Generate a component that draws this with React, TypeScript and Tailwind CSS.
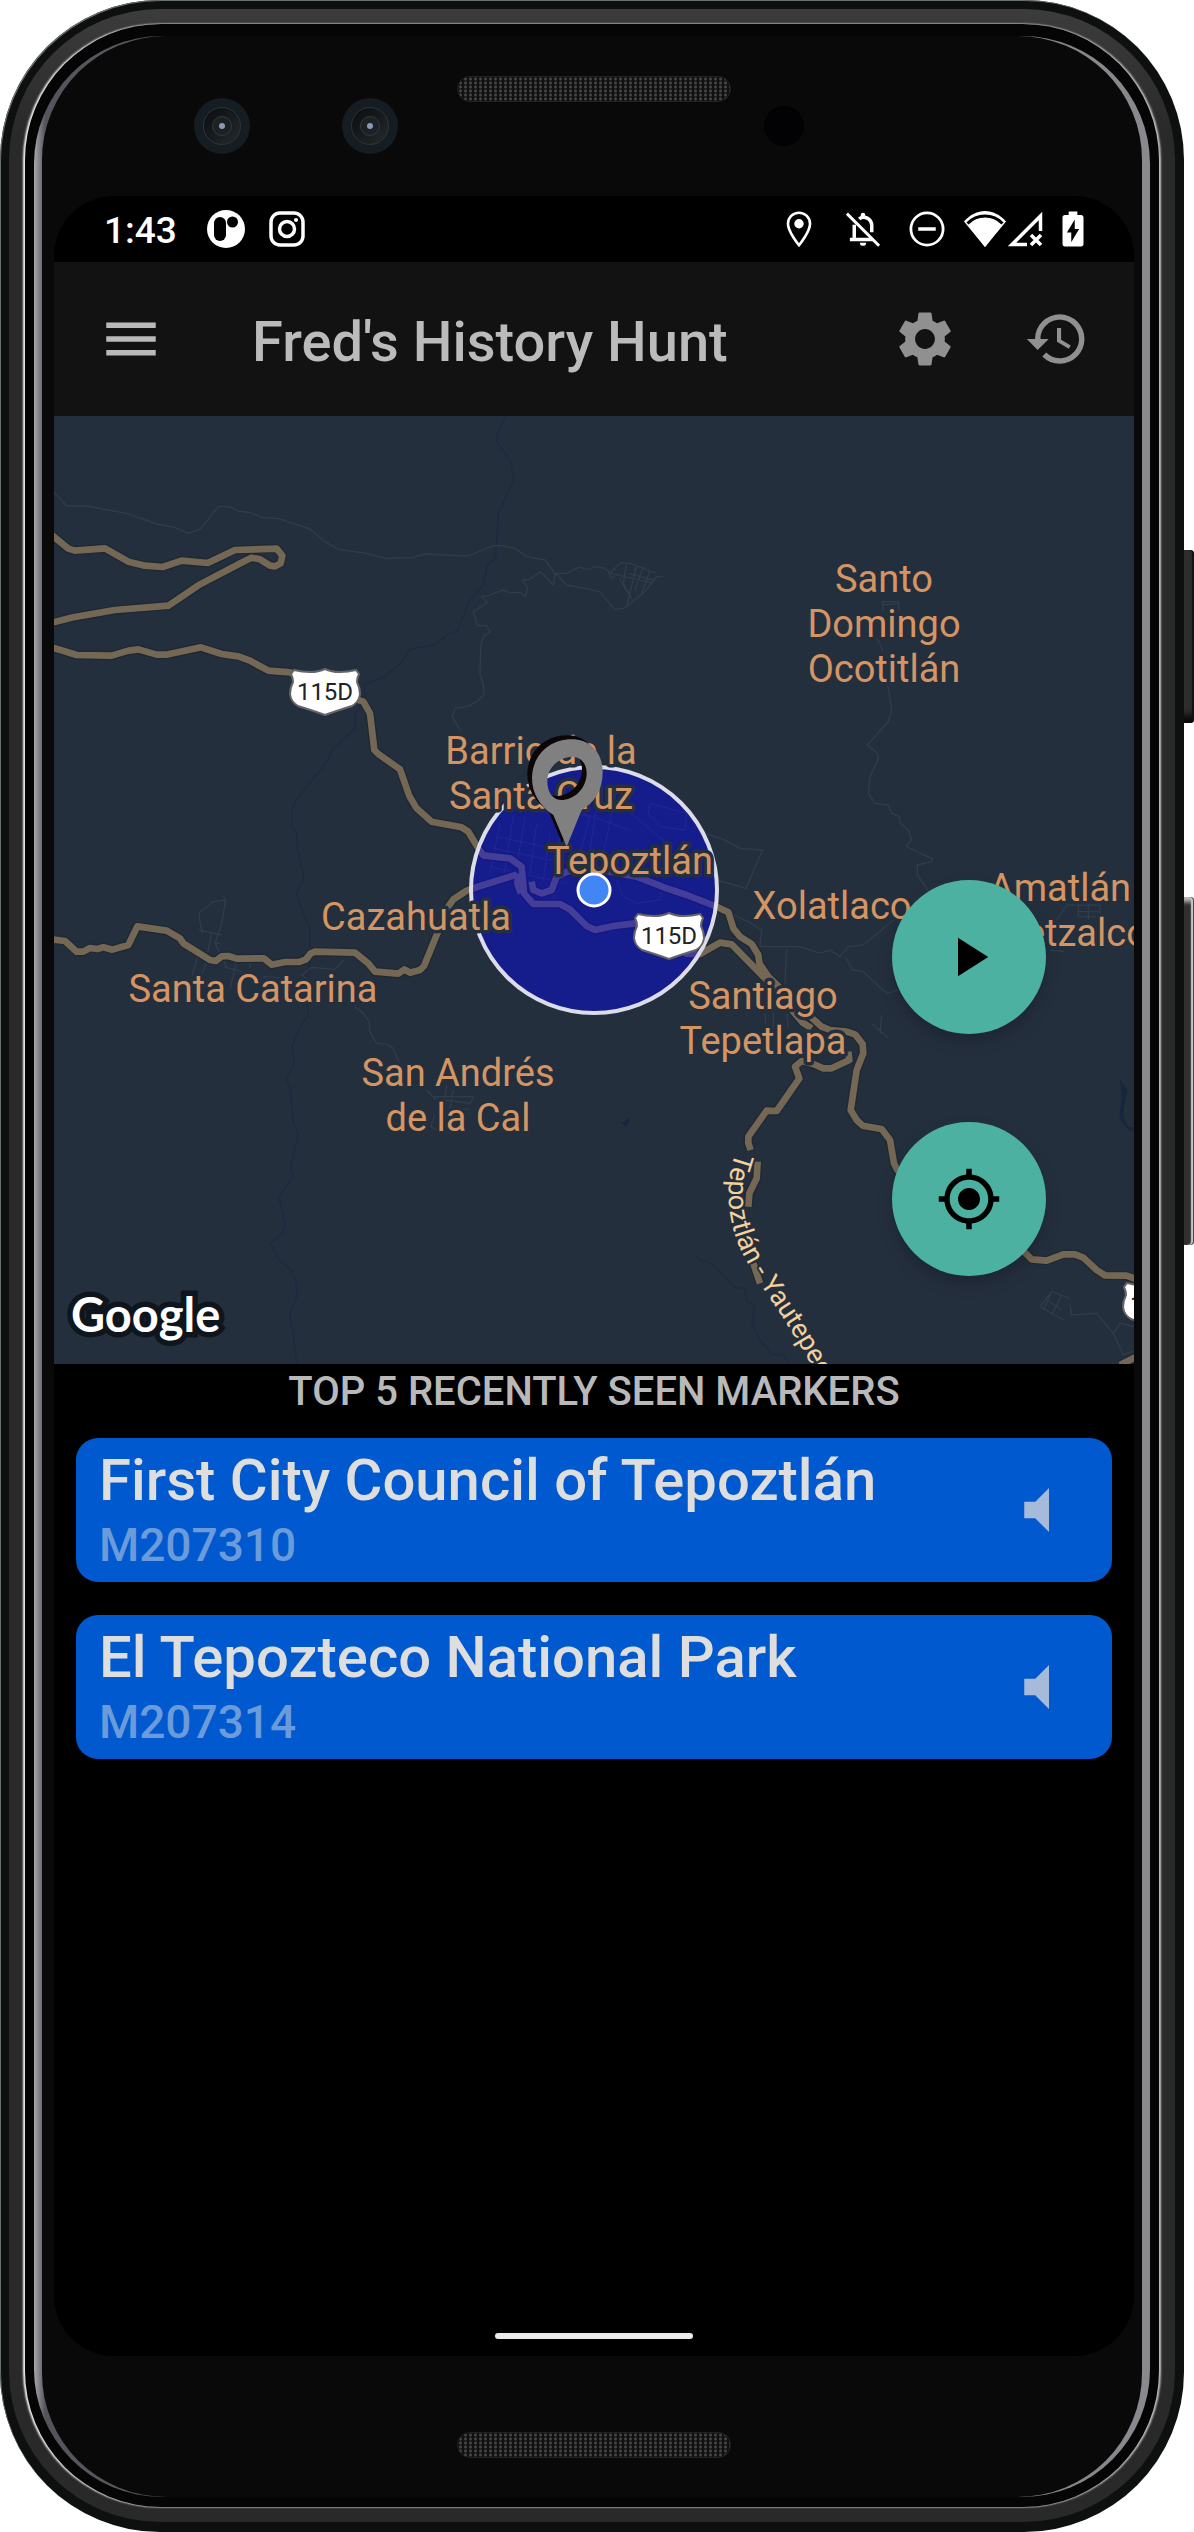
import type { ReactNode } from "react";
import { MdHistory, MdMenu, MdMyLocation, MdPlayArrow, MdSettings, MdVolumeMute } from "react-icons/md";

const markers = [
  { title: "First City Council of Tepoztlán", code: "M207310" },
  { title: "El Tepozteco National Park", code: "M207314" },
];

/* ---------- Device parts ---------- */

function Speaker() {
  return (
    <div className="h-[26px] w-[274px] rounded-full border border-[#222222] bg-[#101010] bg-[radial-gradient(circle,#444444_1px,transparent_2px)] bg-[length:5px_4px]" />
  );
}

function Lens() {
  return (
    <div className="flex size-14 items-center justify-center rounded-full bg-[#161d22]">
      <div className="flex size-[38px] items-center justify-center rounded-full border border-[#2f3438] bg-linear-to-br from-[#0b0d0f] to-[#262a2d]">
        <div className="flex size-5 items-center justify-center rounded-full border border-[#33383d] bg-[#1c2126]">
          <div className="size-1.5 rounded-full bg-[#8d97b5]" />
        </div>
      </div>
    </div>
  );
}

function Phone({ children }: { children: ReactNode }) {
  return (
    <div className="flex min-h-screen bg-white pr-[10px]">
      <div className="relative flex flex-1 flex-col">
        <div className="absolute top-[550px] -right-[10px] h-[173px] w-5 rounded-r-[4px] bg-[#2d2f2f] shadow-[inset_-2px_0_1px_#111,inset_0_-12px_6px_-4px_#0a0a0a]" />
        <div className="absolute top-[897px] -right-[10px] h-[348px] w-5 rounded-r-[4px] bg-[#303030] shadow-[inset_-1px_0_0_#444,inset_-3px_0_1px_#c8c8c8,inset_0_5px_4px_#bbb]" />
        <div className="relative flex flex-1 flex-col rounded-[160px] bg-[#0e0f0f] px-[9px] pt-[9px] pb-[10px] shadow-[inset_1px_1px_0_#6b6f6f]">
          <div className="flex flex-1 flex-col rounded-[151px] bg-[#2b2b2b] bg-linear-to-b from-[#3c3c3c] from-0% via-[#292929] via-5% to-[#292929] px-4 py-[15px]">
            <div className="flex flex-1 flex-col rounded-[136px] bg-[#050505] px-[9px] pt-3 pb-[10px] shadow-[-2px_0_2px_0px_#f0f0f0,2px_0_2px_0px_#c0c0c0]">
              <div className="flex flex-1 flex-col rounded-[128px] bg-linear-to-r from-[#aaaaad] from-0% via-[#55545c] via-1% to-[#8a8a8e] px-2">
                <div className="flex flex-1 flex-col rounded-[124px] bg-[#090909] pr-[8px] pl-3">
                  <div className="grid h-40 shrink-0 grid-cols-[1fr_auto_1fr]">
                    <div className="flex items-center justify-end gap-[92px] pt-5 pr-[59px]">
                      <Lens />
                      <Lens />
                    </div>
                    <div className="pt-10">
                      <Speaker />
                    </div>
                    <div className="flex items-center pt-5 pl-[33px]">
                      <div className="size-10 rounded-full bg-[#020104]" />
                    </div>
                  </div>
                  {children}
                  <div className="flex h-[141px] shrink-0 items-center justify-center pt-9">
                    <Speaker />
                  </div>
                </div>
              </div>
            </div>
          </div>
        </div>
      </div>
    </div>
  );
}

/* ---------- Status bar ---------- */

function StatusBar() {
  return (
    <div className="flex h-[66px] shrink-0 items-center pr-10 pl-[50px] text-white">
      <span className="pt-0.5 text-[37px] leading-none font-medium">1:43</span>
      <svg className="ml-[30px] size-[38px]" viewBox="0 0 38 38" aria-hidden="true">
        <circle cx="19" cy="19" r="19" fill="#fff" />
        <rect x="7" y="7" width="12" height="24" rx="6" fill="#000" />
        <circle cx="25.500" cy="12" r="5.500" fill="#000" />
      </svg>
      <svg className="ml-6 size-9" viewBox="0 0 36 36" fill="none" stroke="#fff" strokeWidth="3.500" aria-hidden="true">
        <rect x="2" y="2" width="32" height="32" rx="9" />
        <circle cx="18" cy="18" r="7.500" />
        <circle cx="27" cy="9" r="2" fill="#fff" stroke="none" />
      </svg>

      <div className="ml-auto flex items-center">
        <svg className="size-[42px]" viewBox="0 0 24 24" aria-hidden="true">
          <path
            d="M12 2.700C8.500 2.700 5.700 5.500 5.700 9c0 4.600 6.300 12.300 6.300 12.300S18.300 13.600 18.300 9c0-3.500-2.800-6.300-6.300-6.300z"
            fill="none"
            stroke="#fff"
            strokeWidth="1.500"
          />
          <circle cx="12" cy="9" r="2.700" fill="#fff" />
        </svg>
        <svg className="ml-[22px] size-[42px]" viewBox="0 0 24 24" fill="none" stroke="#fff" strokeWidth="1.500" aria-hidden="true">
          <path d="M2.800 3.200l18.400 18.400" strokeWidth="1.700" />
          <path d="M7 9.500V18M4.500 18h13M9.800 6.200C12.600 4 17 6 17 10.200v3.600" strokeWidth="2" />
          <path d="M10.700 4a1.300 1.300 0 0 1 2.600 0v1.500h-2.600zM10.200 19.800h3.600a1.800 1.800 0 0 1-3.600 0z" fill="#fff" stroke="none" />
        </svg>
        <svg className="ml-[22px] size-[42px]" viewBox="0 0 24 24" fill="none" stroke="#fff" aria-hidden="true">
          <circle cx="12" cy="12" r="9.200" strokeWidth="1.600" />
          <path d="M7 12h10" strokeWidth="2" />
        </svg>
        <svg className="ml-4 h-9 w-[42px]" viewBox="0 0 42 36" aria-hidden="true">
          <path d="M21 36L0 10.500C12-3.500 30-3.500 42 10.500z" fill="#fff" />
          <path d="M3.500 12.500C13 2.500 29 2.500 38.500 12.500" fill="none" stroke="#000" strokeWidth="3" />
          <path d="M21 36L5.500 16C14 7.500 28 7.500 36.500 16z" fill="#fff" />
        </svg>
        <svg className="ml-0.5 size-9" viewBox="0 0 36 36" fill="none" stroke="#fff" strokeWidth="3.500" aria-hidden="true">
          <path d="M32.500 20V5L4 33.500h15" />
          <path d="M23 24l10 10M33 24L23 34" />
        </svg>
        <svg className="ml-2 size-[42px]" viewBox="0 0 24 24" aria-hidden="true">
          <path
            d="M16.700 4H14.500V2h-5v2H7.300C6.600 4 6 4.600 6 5.300v15.300c0 .8.600 1.400 1.300 1.400h9.300c.8 0 1.400-.6 1.400-1.300V5.300c0-.7-.6-1.300-1.300-1.300zM11 19.500V14H8.500L13 6.500V12h2.500z"
            fill="#fff"
          />
        </svg>
      </div>
    </div>
  );
}

/* ---------- Map ---------- */

/* Line work is stored at three units per map pixel. */
const highways = [
  "M155 1605L205 1646 225 1652 315 1645 385 1685 435 1697 488 1701 545 1682 623 1689 705 1650 830 1646 847 1667 842 1690 825 1699 810 1697 780 1678 755 1673 740 1680 600 1753 505 1817 345 1830 220 1852 155 1868",
  "M155 1942L230 1965 335 1967 385 1952 415 1948 470 1964 498 1964 603 1942 665 1962 715 1969 750 1982 805 2012 870 2017 1070 2098 1090 2105 1110 2140 1123 2250 1135 2262 1200 2308 1228 2388 1250 2425 1295 2465 1385 2482 1405 2495 1435 2545 1450 2566 1530 2575 1565 2600 1572 2680 1600 2712 1680 2712 1710 2728 1760 2778 1785 2790 1840 2778 1905 2770 2060 2862 2100 2862 2160 2828 2195 2833 2295 2935 2408 3068 2435 3085",
  "M155 2818L195 2823 230 2855 250 2855 270 2844 292 2847 310 2842 337 2849 385 2835 412 2779 500 2792 540 2815 550 2830 630 2880 647 2883 665 2869 685 2868 710 2876 792 2875 815 2894 855 2886 898 2886 918 2878 932 2860 945 2855 1065 2858 1105 2890 1125 2915 1195 2921 1213 2908 1230 2918 1260 2910 1272 2898 1310 2805 1345 2720 1360 2698 1400 2672 1440 2658 1550 2624",
  "M1555 2620L1552 2650 1562 2680M1595 2645L1600 2670 1625 2680 1655 2670 1670 2630 1700 2615 1800 2610 1910 2630 2000 2665 2060 2685 2150 2720 2185 2737 2200 2785 2220 2810 2255 2832 2275 2865 2278 2890 2305 2930 2440 3058 2465 3080 2490 3090 2540 3095 2565 3103 2588 3132 2590 3160 2570 3210 2552 3330 2570 3360 2588 3377 2645 3387 2670 3420 2682 3490 2692 3510 2800 3640 3050 3740 3075 3758 3095 3778 3140 3782 3190 3763 3225 3763 3250 3773 3290 3810 3315 3826 3380 3827 3410 3838",
  "M2545 3155L2548 3180 2495 3205 2470 3205 2440 3192 2405 3183 2385 3200 2398 3235 2330 3333 2300 3332 2245 3410 2245 3430 2252 3450M2273 3485L2270 3535 2248 3580 2245 3620M2260 3790L2280 3850",
  "M3360 4095L3410 4070",
];

const streets = [
  "M160 1475L200 1518 260 1518 380 1540 470 1572 525 1582 565 1600 600 1588 655 1520 688 1520 715 1533 750 1538 785 1552 835 1556 930 1587 975 1625 1015 1648 1100 1660 1155 1675 1235 1673 1275 1662 1405 1668 1480 1637 1505 1636 1545 1645 1580 1670 1635 1680 1665 1720 1700 1720 1735 1702 1765 1708 1785 1700 1815 1705 1830 1718 1865 1687 1890 1690 1970 1720",
  "M1665 1720L1660 1755 1622 1715 1590 1738 1568 1740 1582 1765 1577 1790 1562 1778 1530 1778 1508 1770 1465 1787 1445 1790 1462 1808 1420 1835 1432 1877 1460 1877 1470 1895 1450 1910 1442 1940 1440 2025 1450 2050 1452 2085 1430 2105 1400 2120 1365 2125 1357 2150 1383 2195",
  "M1665 1720L1700 1755 1755 1765 1798 1775 1845 1828 1872 1825 1930 1780 1970 1730 1990 1730M1825 1718L1960 1750M1880 1690L1870 1750 1895 1795M1910 1695L1880 1820M1930 1700L1905 1770M1950 1712L1925 1780M1885 1720L1965 1742M1858 1735L1885 1780M1825 1718L1835 1735 1845 1728",
  "M2648 1837V1805H2696V1833M2650 1815L2695 1810M2630 1915L2640 1930 2648 1955M2663 2055L2675 2130 2665 2165 2602 2235 2632 2260 2635 2275 2610 2330 2605 2380 2625 2410 2665 2415 2675 2440 2698 2450 2700 2470 2725 2490 2735 2520 2718 2538 2770 2565 2798 2575 2795 2585 2752 2595 2752 2625 2790 2680",
  "M2120 2502L2170 2518 2220 2545 2288 2550 2238 2665 2150 2640",
  "M670 2688L677 2700 665 2770 645 2830 680 2900M677 2700L640 2705 600 2735 597 2750 607 2800M597 2790L665 2805M635 2800L620 2870M645 2830H660M600 2845L577 2925M672 2900L725 2915M740 2860L750 2880 750 2905M708 2893L690 2965M790 2930L840 2933M605 2920L620 2890",
  "M1030 2880L1005 2908 935 2902 905 2925 925 2940M1065 3020L1090 3040 1108 3065 1110 3095 1130 3130 1162 3133 1180 3145 1197 3190M1280 3270L1300 3290 1420 3290 1410 3310 1300 3295M1340 3255L1330 3320M1360 3270L1350 3325 1408 3328M1305 3345L1292 3380 1330 3400",
  "M2190 2740L2245 2765 2285 2790 2280 2840H2400L2460 2860 2490 2850 2520 2870 2545 2840 2590 2835 2680 2760M2538 2873L2558 2910 2590 2915 2660 2980 2695 2970M2360 2845L2355 2950M2615 3070L2665 3115M2645 3045L2640 3100M2296 3040V3080M2320 3040V3090M2360 3040L2365 3085",
  "M3170 2760L3200 2715H3300V2750H3235V2715M3265 2715V2760M3235 2735H3300M3150 2850L3195 2855",
  "M3120 3920L3155 3875 3210 3895M3140 3900L3185 3930M3120 3920L3190 3960M3155 3875L3130 3930M3185 3885L3155 3945M3210 3915L3215 3945 3290 3940 3340 4000 3360 3970 3405 3980M3340 4000L3370 4065 3410 4050",
];

const townGrid =
  "M1490 2510L1680 2550M1480 2545L1850 2620M1470 2600L1700 2650M1500 2470L1470 2620M1540 2450L1510 2640M1575 2450L1550 2600M1610 2470L1590 2620M1650 2500L1630 2640M1690 2420L1660 2700M1730 2440L1770 2450 1740 2560M1800 2350L1770 2550M1850 2370L1810 2560M1870 2420L2000 2530M1750 2440L1890 2490M1950 2410L2060 2440 2055 2490 1980 2480 1945 2440ZM1850 2640L1870 2690 1910 2710 1980 2700 1990 2660";

const rivers = [
  "M1516 1248L1495 1295 1490 1325 1530 1378 1542 1440 1495 1540 1487 1675 1462 1695 1450 1755 1408 1805 1372 1892 1340 1905 1310 1932 1228 1948 1205 1985 1155 2030 1095 2052 1095 2100 1065 2140 1065 2185 1000 2245 980 2285 885 2405 875 2430 877 2485 890 2500 892 2545 912 2632 890 2680 905 2730 930 2780 930 2850 920 3010 925 3045 900 3080 875 3140 883 3190 858 3235 870 3260 880 3370 895 3400 872 3500 880 3525 837 3592 855 3670 850 3695 812 3730 840 3785 870 3805 888 3840 890 3890 868 3940 880 4000 890 4092",
  "M2090 3768L2100 3782 2130 3788 2205 3863 2235 3865 2240 3905 2265 3915 2255 3965 2280 4020 2315 4062 2350 4065 2370 4100",
];

const labelGroups = [
  { x: 830, y: 176, lines: ["Santo", "Domingo", "Ocotitlán"] },
  { x: 487, y: 348, lines: ["Barrio de la", "Santa Cruz"] },
  { x: 576, y: 458, lines: ["Tepoztlán"] },
  { x: 362, y: 514, lines: ["Cazahuatla"] },
  { x: 199, y: 586, lines: ["Santa Catarina"] },
  { x: 404, y: 670, lines: ["San Andrés", "de la Cal"] },
  { x: 709, y: 593, lines: ["Santiago", "Tepetlapa"] },
  { x: 778, y: 503, lines: ["Xolatlaco"] },
  { x: 1006, y: 485, lines: ["Amatlán"] },
  { x: 1030, y: 530, lines: ["Quetzalcoatl"] },
];

const pinShape =
  "M500 1310L460 1215C420 1190 396 1150 396 1105C396 1040 445 988 515 988C572 988 608 1030 608 1085C608 1140 585 1175 545 1200ZM442 1112C442 1152 462 1172 490 1170C530 1166 560 1130 560 1090C560 1060 542 1040 515 1040C475 1042 442 1075 442 1112Z";

function Shield({ x, y }: { x: number; y: number }) {
  return (
    <g transform={`translate(${x} ${y})`}>
      <path
        d="M4 2Q12 4 20 4Q29 4 35 1Q41 4 50 4Q58 4 66 2L69 6Q67 10 67 14Q70 20 70 26Q69 34 62 38Q46 43 35 47Q24 43 8 38Q1 34 0 26Q0 20 3 14Q3 10 1 6Z"
        fill="#fff"
        stroke="#666"
        strokeWidth="2"
      />
      <text x="35" y="32" textAnchor="middle" fontSize="24" fill="#222">
        115D
      </text>
    </g>
  );
}

function HuntMap() {
  return (
    <section aria-label="Map" className="relative h-[948px] shrink-0 overflow-hidden bg-[#242f3e]">
      <svg className="size-full" viewBox="0 0 1080 948" preserveAspectRatio="xMidYMid slice" aria-hidden="true">
        <g transform="scale(0.333333) translate(-162 -1248)" fill="none" strokeLinejoin="round">
          {rivers.map((d) => (
            <path key={d} d={d} stroke="#1c2942" strokeWidth="4" />
          ))}
          <path d="M3360 3238L3383 3270 3372 3320 3370 3350 3385 3380 3410 3385V3396L3385 3390 3358 3355 3365 3290ZM1865 3370L1890 3350 1880 3380Z" fill="#17263c" />
          {streets.map((d) => (
            <path key={d} d={d} stroke="#313c4a" strokeWidth="4" />
          ))}
          <path d={townGrid} stroke="#38414e" strokeWidth="3" />
          {highways.map((d) => (
            <path key={d} d={d} stroke="#1f2835" strokeWidth="28" />
          ))}
          {highways.map((d) => (
            <path key={d} d={d} stroke="#746855" strokeWidth="20" />
          ))}
        </g>

        <circle cx="540" cy="474" r="123" fill="#0000ff" fillOpacity="0.4" stroke="#dcdcea" strokeWidth="4" />
        <Shield x={236} y={252} />
        <Shield x={580} y={496} />
        <Shield x={1069} y={865} />

        <g fill="#d59563" stroke="#242f3e" strokeWidth="7" strokeLinejoin="round" paintOrder="stroke" fontSize="38" textAnchor="middle">
          {labelGroups.map((label) => (
            <text key={label.lines[0]} y={label.y}>
              {label.lines.map((line, i) => (
                <tspan key={line} x={label.x} dy={i === 0 ? 0 : 45}>
                  {line}
                </tspan>
              ))}
            </text>
          ))}
        </g>

        <path
          id="yautepec-road"
          d="M682 736C676 752 673 770 675 790C678 815 684 830 693 846C704 866 716 882 727 899C738 916 748 932 758 950L780 990"
          fill="none"
        />
        <text fontSize="27" fill="#f3d19c" stroke="#242f3e" strokeWidth="4" strokeLinejoin="round" paintOrder="stroke">
          <textPath href="#yautepec-road">Tepoztlán - Yautepec</textPath>
        </text>

        <g transform="scale(0.333333) translate(1038 -18)" fillRule="evenodd">
          <path d={pinShape} fill="#0d0608" transform="translate(-14 -12)" />
          <path d={pinShape} fill="#808080" />
        </g>
        <circle cx="540" cy="474" r="16" fill="#4285f4" stroke="#fff" strokeWidth="3" />

        <text
          x="17"
          y="916"
          fontSize="47"
          fontWeight="700"
          fontFamily="Lato, sans-serif"
          fill="#fff"
          stroke="#0f151c"
          strokeWidth="11"
          paintOrder="stroke"
        >
          Google
        </text>
      </svg>

      <div className="absolute right-[88px] bottom-[88px] flex flex-col gap-[88px] text-[66px] text-black">
        <button
          type="button"
          aria-label="Start hunt"
          className="flex size-[154px] items-center justify-center rounded-full bg-[#4db1a2] shadow-[0_8px_16px_rgba(0,0,0,0.2)]"
        >
          <MdPlayArrow />
        </button>
        <button
          type="button"
          aria-label="My location"
          className="flex size-[154px] items-center justify-center rounded-full bg-[#4db1a2] shadow-[0_8px_16px_rgba(0,0,0,0.2)]"
        >
          <MdMyLocation />
        </button>
      </div>
    </section>
  );
}

/* ---------- App ---------- */

export default function App() {
  return (
    <Phone>
      <div className="flex flex-1 flex-col overflow-hidden rounded-[60px] bg-black font-[Roboto,sans-serif]">
        <StatusBar />

        <header className="flex h-[154px] shrink-0 items-center bg-[#121212] px-11 text-[66px] text-[#909090]">
          <button type="button" aria-label="Open menu" className="text-[#b9b9b9]">
            <MdMenu />
          </button>
          <h1 className="ml-[88px] flex-1 pt-1.5 text-[56px] leading-none font-medium text-[#bbbbbb]">
            Fred's History Hunt
          </h1>
          <button type="button" aria-label="Settings">
            <MdSettings />
          </button>
          <button type="button" aria-label="History" className="ml-[66px]">
            <MdHistory />
          </button>
        </header>

        <HuntMap />

        <main className="flex-1 px-[22px]">
          <h2 className="pt-1 pb-[22px] text-center text-[40px] leading-[48px] font-medium text-[#b9b9b9]">
            TOP 5 RECENTLY SEEN MARKERS
          </h2>
          <ul className="flex flex-col gap-[33px]">
            {markers.map((marker) => (
              <li
                key={marker.code}
                className="flex h-36 items-center justify-between rounded-[22px] bg-[#0059cf] pr-[41px] pl-[23px] font-medium"
              >
                <div>
                  <h3 className="text-[58px] leading-[70px] text-[#dedede]">{marker.title}</h3>
                  <p className="text-[46px] leading-[60px] text-[#6c9bdb]">{marker.code}</p>
                </div>
                <button type="button" aria-label={`Play ${marker.title}`} className="text-[66px] text-[#a6bad9]">
                  <MdVolumeMute />
                </button>
              </li>
            ))}
          </ul>
        </main>

        <div className="mx-auto mb-[17px] h-1.5 w-[198px] rounded-full bg-[#ebebeb]" />
      </div>
    </Phone>
  );
}
